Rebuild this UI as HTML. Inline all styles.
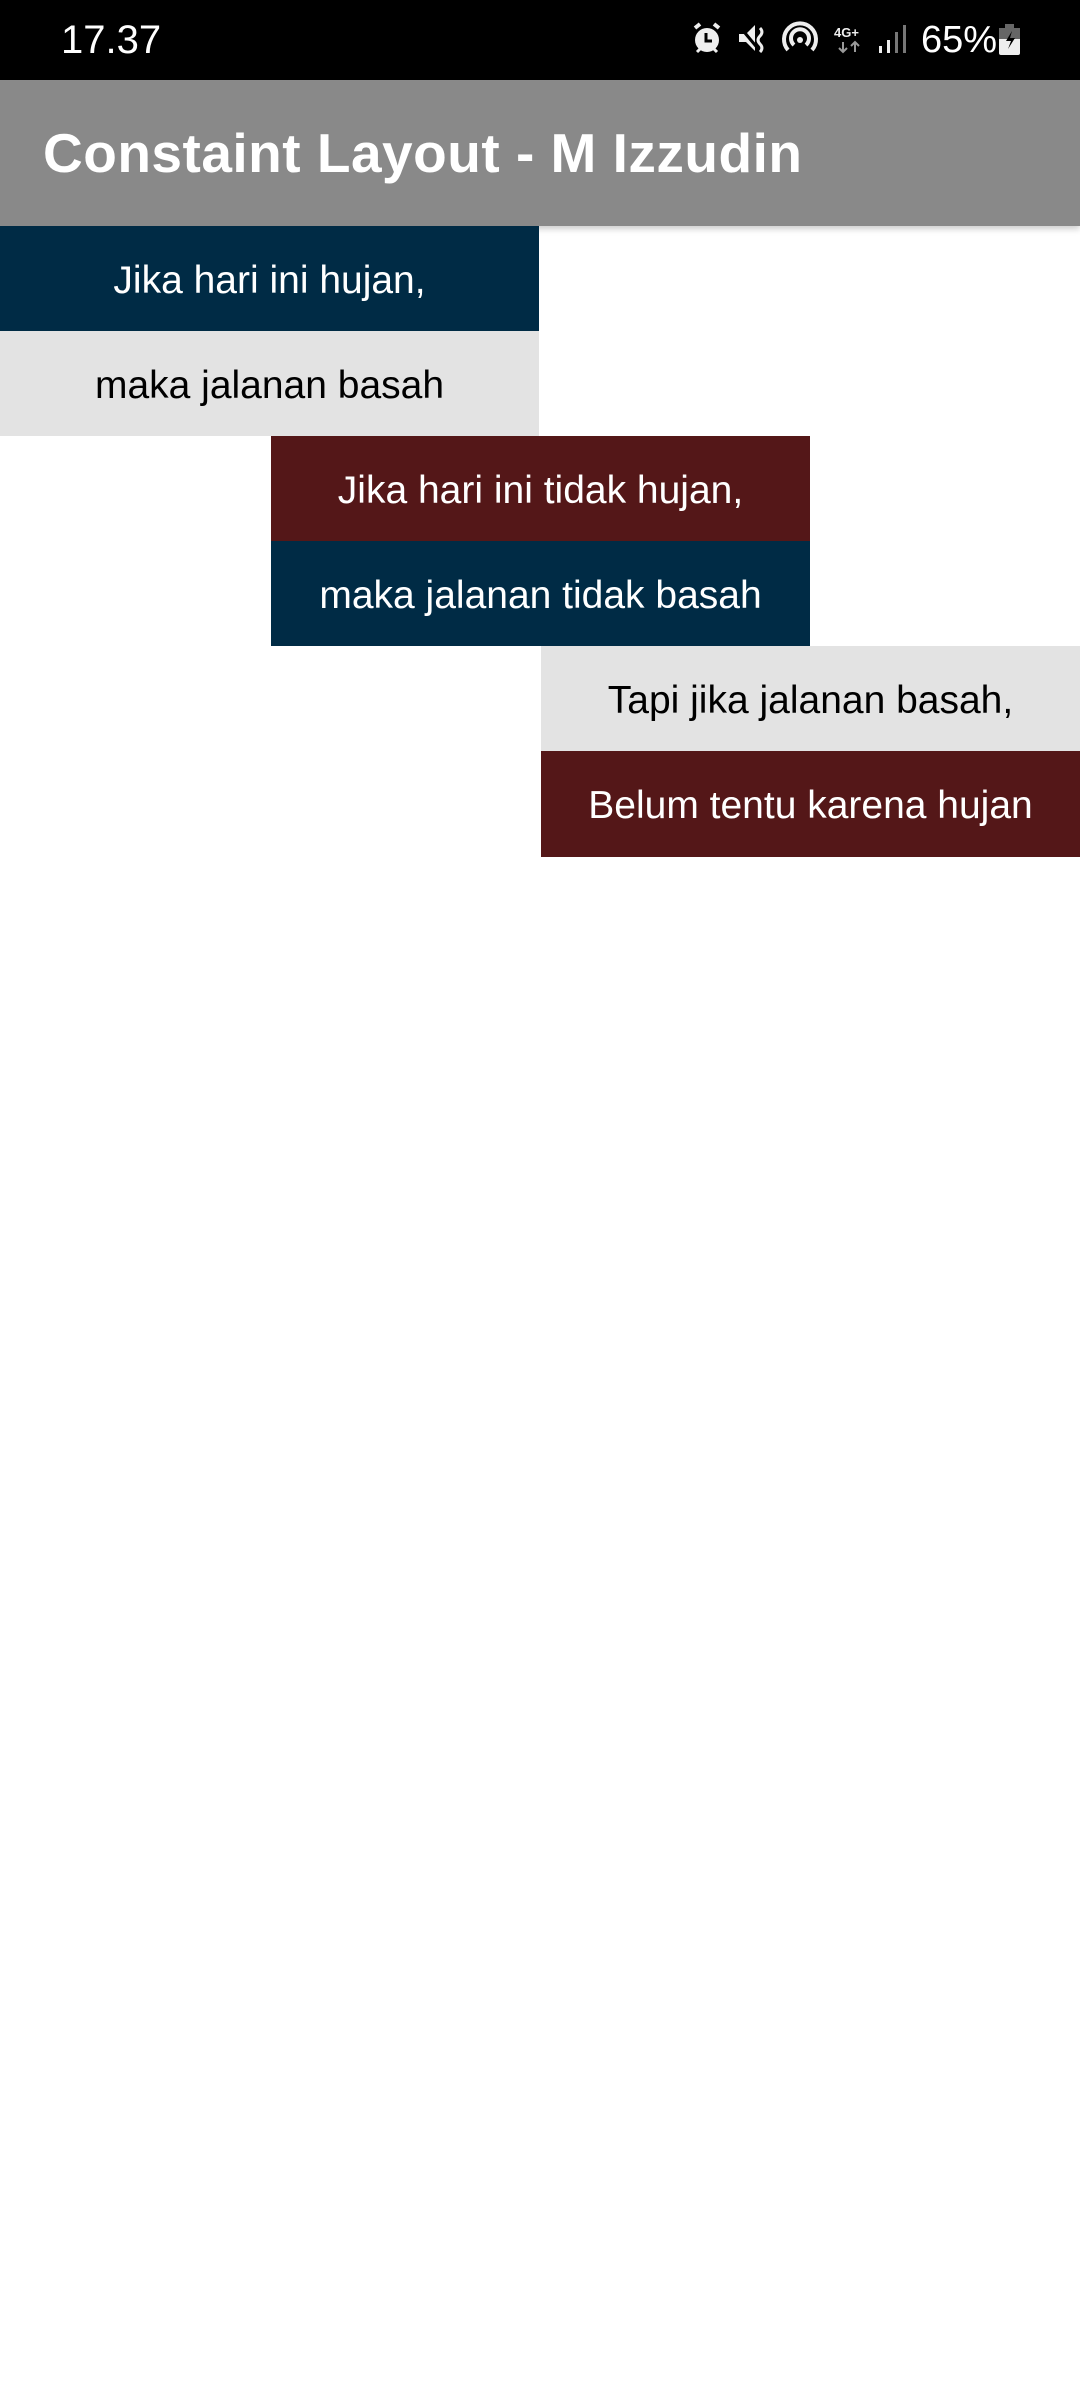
<!DOCTYPE html>
<html><head><meta charset="utf-8"><style>
body{margin:0;width:1080px;height:2400px;background:#fff;font-family:"Liberation Sans",Roboto,sans-serif;position:relative;overflow:hidden}
.sb{position:absolute;left:0;top:0;width:1080px;height:80px;background:#000;color:#fff}
.ab{position:absolute;left:0;top:80px;width:1080px;height:146px;background:#898989;box-shadow:0 3px 6px rgba(0,0,0,.2)}
.ab span{position:absolute;left:43px;top:46px;font-size:55px;color:#fff;font-weight:bold;line-height:1;letter-spacing:0.5px}
.b{position:absolute;width:539px;height:105px;display:flex;align-items:center;justify-content:center;font-size:39px;padding-top:4px;box-sizing:border-box}
.n{background:#002b45;color:#fff}.g{background:#e3e3e3;color:#000}.r{background:#541718;color:#fff}
</style></head><body>
<div class="sb">
<div style="position:absolute;left:61px;top:18px;font-size:40px;">17.37</div>
<svg width="1080" height="80" style="position:absolute;left:0;top:0" fill="#eee">
<circle cx="707" cy="40" r="12"/><path d="M695 28l5-4M719 28l-5-4" stroke="#eee" stroke-width="4"/><path d="M706 33v8h6" stroke="#000" stroke-width="3" fill="none"/><path d="M697 52l3-3M717 52l-3-3" stroke="#eee" stroke-width="3"/>
<path d="M739 34h7l9-9v26l-9-9h-7z"/><path d="M740 27l20 24" stroke="#000" stroke-width="3"/><path d="M760 28q4 4 0 8q-4 4 0 8q4 4 0 8" stroke="#eee" stroke-width="3" fill="none"/>
<path d="M788 50a16 16 0 1 1 24 0" stroke="#eee" stroke-width="4" fill="none"/><path d="M794 45a9 9 0 1 1 12 0" stroke="#eee" stroke-width="4" fill="none"/><circle cx="800" cy="40" r="3"/>
<text x="834" y="37" font-size="13" font-weight="bold" fill="#eee" font-family="Liberation Sans">4G+</text>
<path d="M843 42v10M839 48l4 4 4-4M855 52v-10M851 46l4-4 4 4" stroke="#999" stroke-width="2" fill="none"/>
<rect x="879" y="46" width="3" height="7"/><rect x="887" y="40" width="3" height="13"/><rect x="895" y="32" width="3" height="21" fill="#777"/><rect x="903" y="25" width="3" height="28" fill="#777"/>
<rect x="999" y="28" width="21" height="27" rx="2"/><rect x="999" y="28" width="21" height="11" fill="#666"/><rect x="1005" y="24" width="9" height="4" fill="#666"/><path d="M1012 31l-6 10h5l-3 8 7-11h-5z" fill="#000"/>
</svg>
<div style="position:absolute;left:921px;top:19px;font-size:38px;">65%</div>
</div>
<div class="ab"><span>Constaint Layout - M Izzudin</span></div>
<div class="b n" style="left:0;top:226px">Jika hari ini hujan,</div>
<div class="b g" style="left:0;top:331px">maka jalanan basah</div>
<div class="b r" style="left:271px;top:436px">Jika hari ini tidak hujan,</div>
<div class="b n" style="left:271px;top:541px">maka jalanan tidak basah</div>
<div class="b g" style="left:541px;top:646px">Tapi jika jalanan basah,</div>
<div class="b r" style="left:541px;top:751px;height:106px">Belum tentu karena hujan</div>
</body></html>
